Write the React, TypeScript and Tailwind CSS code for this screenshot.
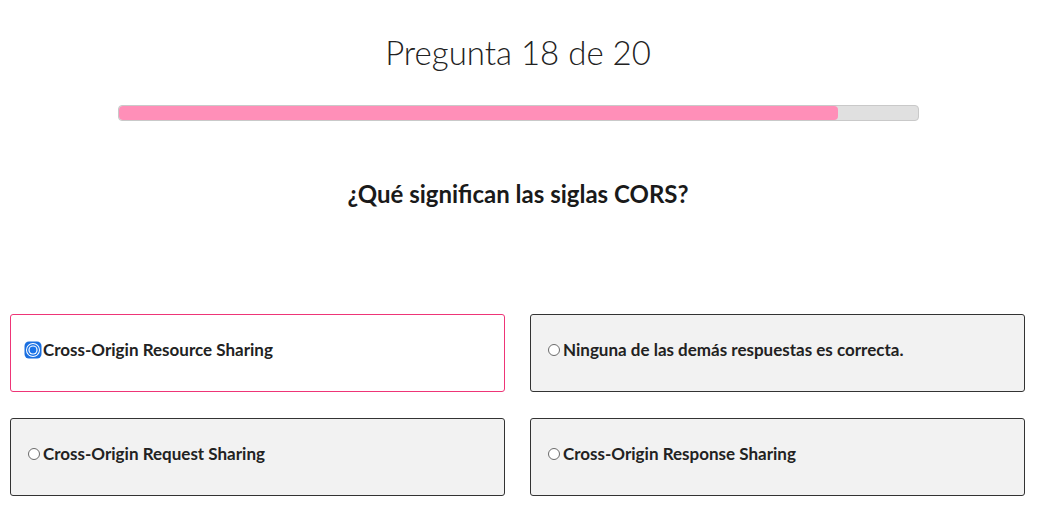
import React, { useState } from 'react';

const options = [
  { id: 'a', text: 'Cross-Origin Resource Sharing' },
  { id: 'b', text: 'Ninguna de las demás respuestas es correcta.' },
  { id: 'c', text: 'Cross-Origin Request Sharing' },
  { id: 'd', text: 'Cross-Origin Response Sharing' },
];

function Radio({ checked }: { checked: boolean }) {
  if (checked) {
    return (
      <svg width="18" height="18" viewBox="0 0 18 18" className="shrink-0">
        <rect x="0.5" y="0.5" width="17" height="17" rx="4.5" fill="#1a6fe0" />
        <circle cx="9" cy="9" r="7" fill="#ffffff" />
        <circle cx="9" cy="9" r="6" fill="#1a73e8" />
        <circle cx="9" cy="9" r="4.6" fill="#ffffff" />
        <circle cx="9" cy="9" r="3.4" fill="#1a73e8" />
      </svg>
    );
  }
  return (
    <span className="mx-[2px] inline-block h-[12px] w-[12px] shrink-0 rounded-full border border-[#6b6b6b] bg-white" />
  );
}

export default function App() {
  const [selected, setSelected] = useState('a');
  const current = 18;
  const total = 20;

  return (
    <div className="w-[1036px] bg-white font-['Lato',_sans-serif] text-[#222]">
      <h1 className="pt-[29px] text-center text-[33px] font-light leading-[46px] text-[#222]">
        Pregunta {current} de {total}
      </h1>

      <div className="mx-auto mt-[30px] h-[16px] w-[801px] overflow-hidden rounded-[4px] border border-[#c9c9c9] bg-[#e0e0e0]">
        <div className="h-full rounded-[4px] bg-[#ff8fb8]" style={{ width: `${(current / total) * 100}%` }} />
      </div>

      <h2 className="mt-[58px] text-center text-[24px] font-bold leading-[30px] text-[#1a1a1a]">
        ¿Qué significan las siglas CORS?
      </h2>

      <div className="mt-[105px] grid grid-cols-[495px_495px] gap-x-[25px] gap-y-[26px] px-[10px]">
        {options.map((o) => {
          const isSel = o.id === selected;
          return (
            <label
              key={o.id}
              onClick={() => setSelected(o.id)}
              className={
                isSel
                  ? 'flex h-[78px] cursor-pointer items-center rounded-[3px] border border-[#ee3577] bg-white pb-[6px] pl-[13px] text-[17px] font-bold'
                  : 'flex h-[78px] cursor-pointer items-center rounded-[3px] border border-[#333] bg-[#f2f2f2] pb-[6px] pl-[15px] text-[17px] font-bold'
              }
            >
              <Radio checked={isSel} />
              <span className="ml-[1px]">{o.text}</span>
            </label>
          );
        })}
      </div>
    </div>
  );
}
